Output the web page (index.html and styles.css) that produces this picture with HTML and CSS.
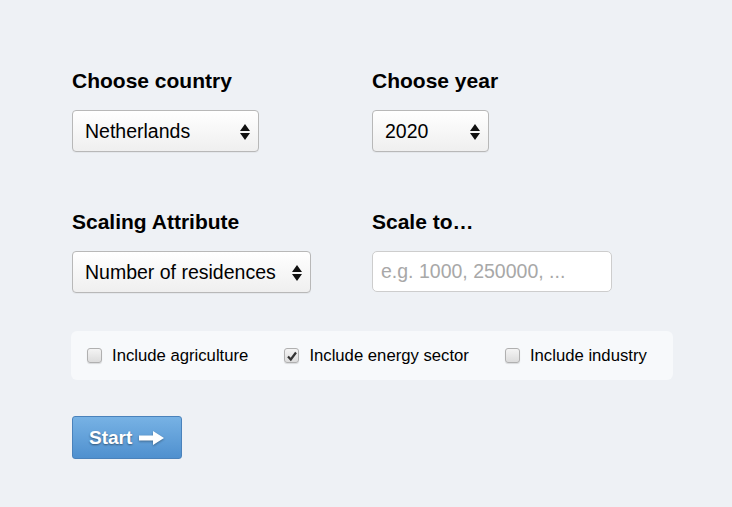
FILE: index.html
```html
<!DOCTYPE html>
<html>
<head>
<meta charset="utf-8">
<link rel="stylesheet" href="styles.css">
</head>
<body>
<div class="page">
  <div class="grid">
    <div class="field">
      <div class="label">Choose country</div>
      <div class="select w-country"><span>Netherlands</span><svg class="arr" width="10" height="16" viewBox="0 0 10 16"><path d="M5 0L10 7H0Z M0 9H10L5 16Z" fill="#111"/></svg></div>
    </div>
    <div class="field">
      <div class="label">Choose year</div>
      <div class="select w-year"><span>2020</span><svg class="arr" width="10" height="16" viewBox="0 0 10 16"><path d="M5 0L10 7H0Z M0 9H10L5 16Z" fill="#111"/></svg></div>
    </div>
    <div class="field">
      <div class="label">Scaling Attribute</div>
      <div class="select w-attr"><span>Number of residences</span><svg class="arr" width="10" height="16" viewBox="0 0 10 16"><path d="M5 0L10 7H0Z M0 9H10L5 16Z" fill="#111"/></svg></div>
    </div>
    <div class="field">
      <div class="label">Scale to…</div>
      <input class="input" type="text" placeholder="e.g. 1000, 250000, ...">
    </div>
  </div>
  <div class="panel">
    <label class="check"><span class="box"></span>Include agriculture</label>
    <label class="check"><span class="box"><svg width="12" height="12" viewBox="0 0 12 12"><path d="M2 6.5L4.8 9.5L10 2.5" stroke="#333" stroke-width="2.2" fill="none"/></svg></span>Include energy sector</label>
    <label class="check"><span class="box"></span>Include industry</label>
  </div>
  <button class="start">Start <svg width="25" height="14" viewBox="0 0 25 14"><path d="M0 4.5H14V0L25 7L14 14V9.5H0Z" fill="#fff"/></svg></button>
</div>
</body>
</html>
```
FILE: styles.css
```css
html, body {
  margin: 0;
  background: #eef1f5;
}
.page {
  padding: 70px 0 0 72px;
  font-family: "Liberation Sans", Arial, sans-serif;
  color: #000;
}
.grid {
  display: grid;
  grid-template-columns: 300px 300px;
  row-gap: 59px;
}
.field {
  display: flex;
  flex-direction: column;
  align-items: flex-start;
}
.label {
  font-size: 21px;
  font-weight: bold;
  line-height: 22px;
  margin-bottom: 18px;
}
.select {
  box-sizing: border-box;
  height: 42px;
  display: flex;
  align-items: center;
  justify-content: space-between;
  padding: 0 8px 0 12px;
  border: 1px solid #b8b8b8;
  border-radius: 4px;
  background: linear-gradient(#ffffff, #efefef);
  font-size: 19.5px;
  white-space: nowrap;
  box-shadow: 0 1px 0 rgba(0,0,0,0.04);
}
.w-country { width: 187px; }
.w-year { width: 117px; }
.w-attr { width: 239px; }
.arr { margin-top: 1px; flex-shrink: 0; }
.input {
  box-sizing: border-box;
  width: 240px;
  height: 41px;
  border: 1px solid #cdcdcd;
  border-radius: 5px;
  background: #fff;
  padding: 0 8px;
  font-family: "Liberation Sans", Arial, sans-serif;
  font-size: 19.5px;
  margin: 0;
}
.input::placeholder { color: #a8a8a8; }
.panel {
  box-sizing: border-box;
  width: 602px;
  height: 49px;
  margin: 38px 0 0 -1px;
  background: #f7f9fb;
  border-radius: 6px;
  display: flex;
  align-items: center;
  padding-left: 16px;
  font-size: 16.7px;
  white-space: nowrap;
}
.check {
  display: flex;
  align-items: center;
  flex-shrink: 0;
  margin-right: 36px;
}
.box {
  box-sizing: border-box;
  flex-shrink: 0;
  width: 15px;
  height: 15px;
  border: 1px solid #b0b0b0;
  border-radius: 3px;
  background: linear-gradient(#f4f4f4, #dcdcdc);
  margin-right: 10px;
  display: flex;
  align-items: center;
  justify-content: center;
  box-shadow: 0 1px 1px rgba(0,0,0,0.12);
}
.start {
  margin-top: 36px;
  box-sizing: border-box;
  width: 110px;
  height: 43px;
  border: 1px solid #4a82bb;
  border-radius: 3px;
  background: linear-gradient(#77b2e4, #4f90cf);
  color: #fff;
  font-family: "Liberation Sans", Arial, sans-serif;
  font-size: 19px;
  font-weight: bold;
  display: flex;
  align-items: center;
  padding: 0 0 0 16px;
  gap: 7px;
  text-shadow: 0 1px 2px rgba(0,0,0,0.45);
}
.start svg { filter: drop-shadow(0 1px 1px rgba(0,0,0,0.35)); }
```
